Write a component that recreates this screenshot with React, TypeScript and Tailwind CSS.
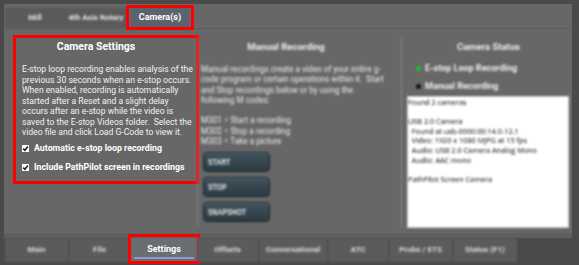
import React from "react";

const Check = () => (
  <span className="inline-flex w-[7px] h-[7px] bg-white mr-[5px] items-center justify-center shrink-0">
    <svg width="7" height="7" viewBox="0 0 7 7">
      <path d="M1.2 3.6 L2.9 5.3 L5.9 1.6" stroke="#222" strokeWidth="1.6" fill="none" />
    </svg>
  </span>
);

const BtnMR = ({ label }: { label: string }) => (
  <div className="w-[67px] h-[20px] rounded-[4px] border border-[#1d2428] bg-[linear-gradient(#3f525c,#2c3b43)] shadow-[inset_0_1px_0_rgba(255,255,255,0.15)] flex items-center pl-[4px]">
    <span className="text-[#e8ecef] text-[9.5px] font-bold origin-left scale-x-[0.72] inline-block font-['Liberation_Sans',sans-serif]">{label}</span>
  </div>
);

export default function App() {
  const bottomTabs: { label: string; w: string; active?: boolean }[] = [
    { label: "Main", w: "w-[64px]" },
    { label: "File", w: "w-[62px]" },
    { label: "Settings", w: "w-[66px]", active: true },
    { label: "Offsets", w: "w-[62px]" },
    { label: "Conversational", w: "w-[69px]" },
    { label: "ATC", w: "w-[61px]" },
    { label: "Probe / ETS", w: "w-[64px]" },
    { label: "Status (F1)", w: "w-[65px]" },
  ];
  return (
    <div className="w-[579px] h-[265px] bg-[#4a4a4a] overflow-hidden font-['Roboto',sans-serif] text-white relative">
      {/* top tabs */}
      <div className="h-[4px]" />
      <div className="ml-[4px] mr-[7px] h-[24px] bg-[#676767] flex items-end pl-[1px]">
        <div className="flex h-[20px] bg-[#5a5a5a] blur-[0.8px]">
          <div className="w-[60px] flex items-center justify-center text-[8px] font-bold text-[#e6e6e6]">Mill</div>
          <div className="w-[62px] flex items-center justify-center text-[8px] font-bold text-[#e6e6e6] whitespace-nowrap">4th Axis Rotary</div>
        </div>
        <div className="relative w-[58px] h-[20px] ml-[4px] bg-[#5c636d] flex items-center justify-center text-[9px] font-bold text-white">
          Camera(s)
          <div className="absolute left-[-5px] top-[-3px] w-[68px] h-[25px] border-[3px] border-[#f00]" />
        </div>
      </div>
      {/* main panel */}
      <div className="ml-[4px] mr-[7px] h-[205px] bg-[#676767] border-t border-[#5e5e5e] flex">
        {/* left */}
        <div className="w-[193px] pl-[9px] pt-[6px] relative">
          <div className="w-[186px] h-[149px] border-[3px] border-[#f00] px-[6px]">
            <div className="text-center font-bold text-[10.5px] leading-[13px] mt-[2px] pr-[20px]">Camera Settings</div>
            <div className="text-[8.6px] leading-[10.5px] mt-[11px] whitespace-pre text-[#f2f2f2]">
              {"E-stop loop recording enables analysis of the\nprevious 30 seconds when an e-stop occurs.\nWhen enabled, recording is automatically\nstarted after a Reset and a slight delay\noccurs after an e-stop while the video is\nsaved to the E-stop Videos folder.  Select the\nvideo file and click Load G-Code to view it."}
            </div>
            <div className="flex items-center mt-[5px] text-[8.8px] font-bold leading-[11px]"><Check />Automatic e-stop loop recording</div>
            <div className="flex items-center mt-[8px] text-[8.8px] font-bold leading-[11px]"><Check />Include PathPilot screen in recordings</div>
          </div>
        </div>
        {/* middle */}
        <div className="w-[204px] border-l border-[#8a8a8a] mt-[8px] mb-[7px] pl-[3px] blur-[1px]">
          <div className="text-center font-bold text-[9.5px] leading-[12px] text-[#eeeeee] mt-[4px] pr-[30px]">Manual Recording</div>
          <div className="text-[8.2px] leading-[10.3px] mt-[11px] whitespace-pre text-[#ececec]">
            {"Manual recordings create a video of your entire g-\ncode program or certain operations within it.  Start\nand Stop recordings below or by using the\nfollowing M codes:\n\nM301 = Start a recording\nM302 = Stop a recording\nM303 = Take a picture"}
          </div>
          <div className="flex flex-col gap-[5px] mt-[6px] ml-[2px]">
            <BtnMR label="START" />
            <BtnMR label="STOP" />
            <BtnMR label="SNAPSHOT" />
          </div>
        </div>
        {/* right */}
        <div className="flex-1 border-l border-[#8a8a8a] mt-[8px] mb-[5px] pl-[5px] pr-[2px] blur-[1px] flex flex-col">
          <div className="text-center font-bold text-[9.5px] leading-[12px] text-[#eeeeee] mt-[4px]">Camera Status</div>
          <div className="flex items-center mt-[9px] ml-[9px] text-[9px] font-bold text-[#eeeeee]">
            <span className="w-[5px] h-[5px] rounded-full bg-[#22c322] mr-[4px]" />E-stop Loop Recording
          </div>
          <div className="flex items-center mt-[4px] ml-[9px] text-[9px] font-bold text-[#eeeeee]">
            <span className="w-[5px] h-[5px] rounded-full bg-[#111] mr-[4px]" />Manual Recording
          </div>
          <div className="mt-[3px] flex-1 bg-white border border-[#ccc] text-black text-[7.3px] leading-[9.6px] whitespace-pre pt-[1px] font-['Open_Sans',sans-serif] mr-[1px]">
            {"Found 2 cameras\n\nUSB 2.0 Camera\n  Found at usb-0000:00:14.0-12.1\n  Video: 1920 x 1080 MJPG at 15 fps\n  Audio: USB 2.0 Camera Analog Mono\n  Audio: AAC mono\n\nPathPilot Screen Camera"}
          </div>
        </div>
      </div>
      {/* bottom tabs */}
      <div className="ml-[4px] mr-[7px] h-[5px] bg-[#5f5f5f]" />
      <div className="ml-[5px] h-[24px] flex">
        {bottomTabs.map((t) =>
          t.active ? (
            <div key={t.label} className={`${t.w} relative bg-[#6a6d72] flex items-center justify-center text-[9px] font-bold text-white`}>
              {t.label}
              <div className="absolute left-[3px] right-[3px] bottom-[3px] h-[2px] bg-[#7f9fd4]" />
              <div className="absolute left-[-3px] right-[-3px] top-[-4px] bottom-[-2px] border-[3px] border-[#f00]" />
            </div>
          ) : (
            <div key={t.label} className={`${t.w} bg-[#5b5b5b] border-r border-[#4e4e4e] flex items-center justify-center text-[8px] font-bold text-[#dddddd] whitespace-nowrap overflow-hidden blur-[0.8px]`}>
              {t.label}
            </div>
          )
        )}
      </div>
    </div>
  );
}
